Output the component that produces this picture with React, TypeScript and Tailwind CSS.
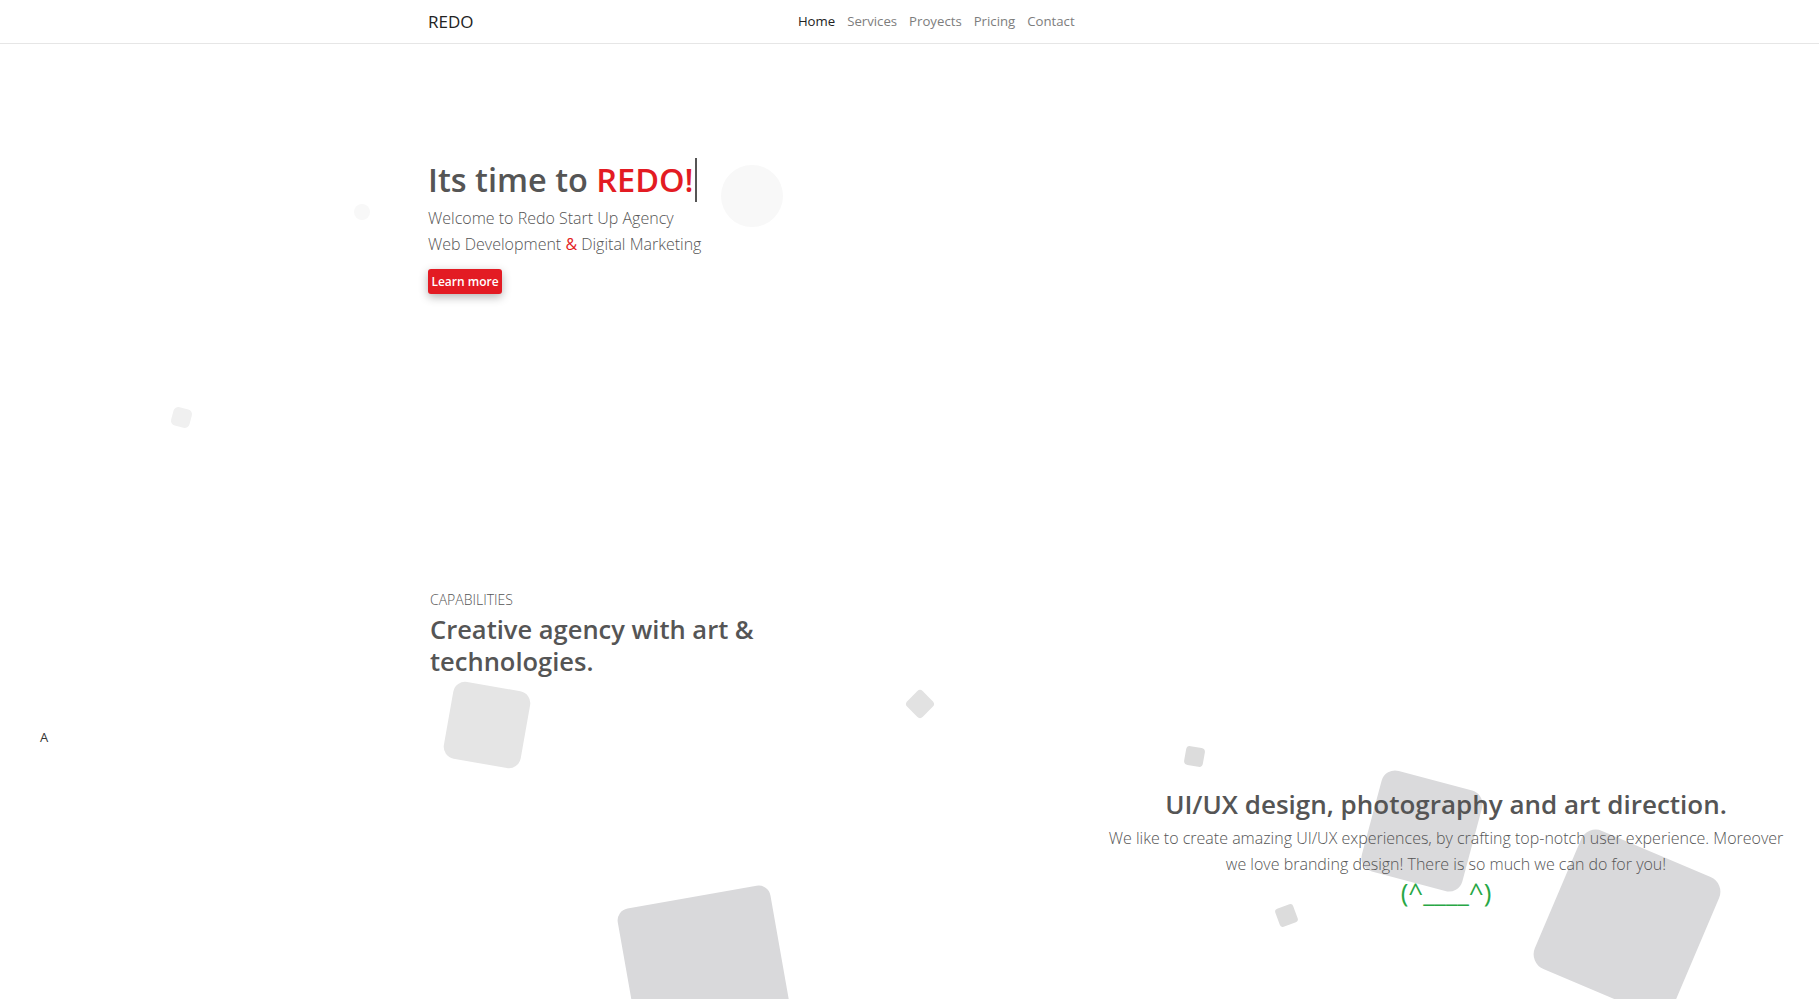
import React from "react";

const navLinks = ["Home", "Services", "Proyects", "Pricing", "Contact"];

const Shapes = () => (
  <div className="pointer-events-none absolute inset-0 z-0">
    {/* hero bubbles */}
    <div className="absolute left-[354px] top-[204px] h-[16px] w-[16px] rounded-full bg-[#f8f8f8]" />
    <div className="absolute left-[721px] top-[165px] h-[62px] w-[62px] rounded-full bg-[#f8f8f8]" />
    <div className="absolute left-[172px] top-[408px] h-[19px] w-[19px] rotate-[15deg] rounded-[5px] bg-[#f0f0f0]" />
    {/* capabilities squares */}
    <div className="absolute left-[448px] top-[686px] h-[78px] w-[78px] rotate-[10deg] rounded-[12px] bg-[#e5e5e5]" />
    <div className="absolute left-[909px] top-[693px] h-[22px] w-[22px] rotate-45 rounded-[4px] bg-[#e2e2e2]" />
    <div className="absolute left-[628px] top-[896px] h-[155px] w-[155px] rotate-[-10deg] rounded-[12px] bg-[#d9d9db]" />
    {/* right side squares */}
    <div className="absolute left-[1185px] top-[747px] h-[19px] w-[19px] rotate-[10deg] rounded-[4px] bg-[#dcdcdc]" />
    <div className="absolute left-[1277px] top-[906px] h-[19px] w-[19px] rotate-[-20deg] rounded-[3px] bg-[#dcdcdc]" />
    <div className="absolute left-[1370px] top-[779px] h-[104px] w-[104px] rotate-[15deg] rounded-[14px] bg-[#dadadc]" />
    <div className="absolute left-[1552px] top-[848px] h-[150px] w-[150px] rotate-[23deg] rounded-[16px] bg-[#d9d9db]" />
  </div>
);

export default function App() {
  return (
    <div className="relative min-h-[1200px] overflow-hidden bg-white font-['Open_Sans',sans-serif] text-[#555]">
      <Shapes />

      {/* Navbar */}
      <header className="relative z-10 border-b border-[#e6e6e6] bg-white">
        <div className="mx-auto flex h-[43px] w-[963px] items-center">
          <a className="text-[17px] text-[#222]">REDO</a>
          <nav className="flex flex-1 justify-center pl-[8px] text-[13.2px]">
            {navLinks.map((l, i) => (
              <a
                key={l}
                className={`px-[6px] ${i === 0 ? "text-[#222]" : "text-[#7d7d7d]"}`}
              >
                {l}
              </a>
            ))}
          </nav>
        </div>
      </header>

      <main className="relative z-10">
        {/* Hero */}
        <section className="mx-auto w-[963px] pt-[114px]">
          <h1 className="text-[32.5px] font-semibold leading-[44px] text-[#555]">
            <span className="inline-block border-r-2 border-[#555] pr-[1px]">
              Its time to <span className="text-[#e31b23]">REDO!</span>
            </span>
          </h1>
          <p className="mt-[3px] text-[16px] font-light leading-[26px] text-[#555]">
            Welcome to Redo Start Up Agency
            <br />
            Web Development <span className="font-normal text-[#e31b23]">&amp;</span> Digital Marketing
          </p>
          <button className="mt-[12px] h-[25px] w-[74px] rounded-[3px] bg-[#e31b23] text-[12px] font-semibold text-white shadow-[0_3px_10px_rgba(0,0,0,0.3)]">
            Learn more
          </button>
        </section>

        {/* Capabilities */}
        <section className="mx-auto w-[963px] pt-[296px] pl-[2px]">
          <p className="text-[14px] font-light leading-[20px] text-[#555]">CAPABILITIES</p>
          <h2 className="mt-[3px] w-[360px] text-[25.5px] font-semibold leading-[32px] text-[#555]">
            Creative agency with art &amp; technologies.
          </h2>
        </section>

        <div className="absolute left-[40px] top-[684px] text-[13px] text-[#333]">A</div>

        {/* UI/UX */}
        <section className="flex justify-end pt-[110px] pr-[18px]">
          <div className="flex w-[710px] flex-col items-center text-center">
            <h3 className="text-[26px] font-semibold leading-[34px] text-[#555]">
              UI/UX design, photography and art direction.
            </h3>
            <p className="mt-[4px] text-[16px] font-light leading-[26px] text-[#555]">
              <span className="block whitespace-nowrap">
                We like to create amazing UI/UX experiences, by crafting top-notch user experience. Moreover
              </span>
              <span className="block whitespace-nowrap">
                we love branding design! There is so much we can do for you!
              </span>
            </p>
            <p className="text-[26px] leading-[30px] text-[#28a745]">(^____^)</p>
          </div>
        </section>
      </main>
    </div>
  );
}
